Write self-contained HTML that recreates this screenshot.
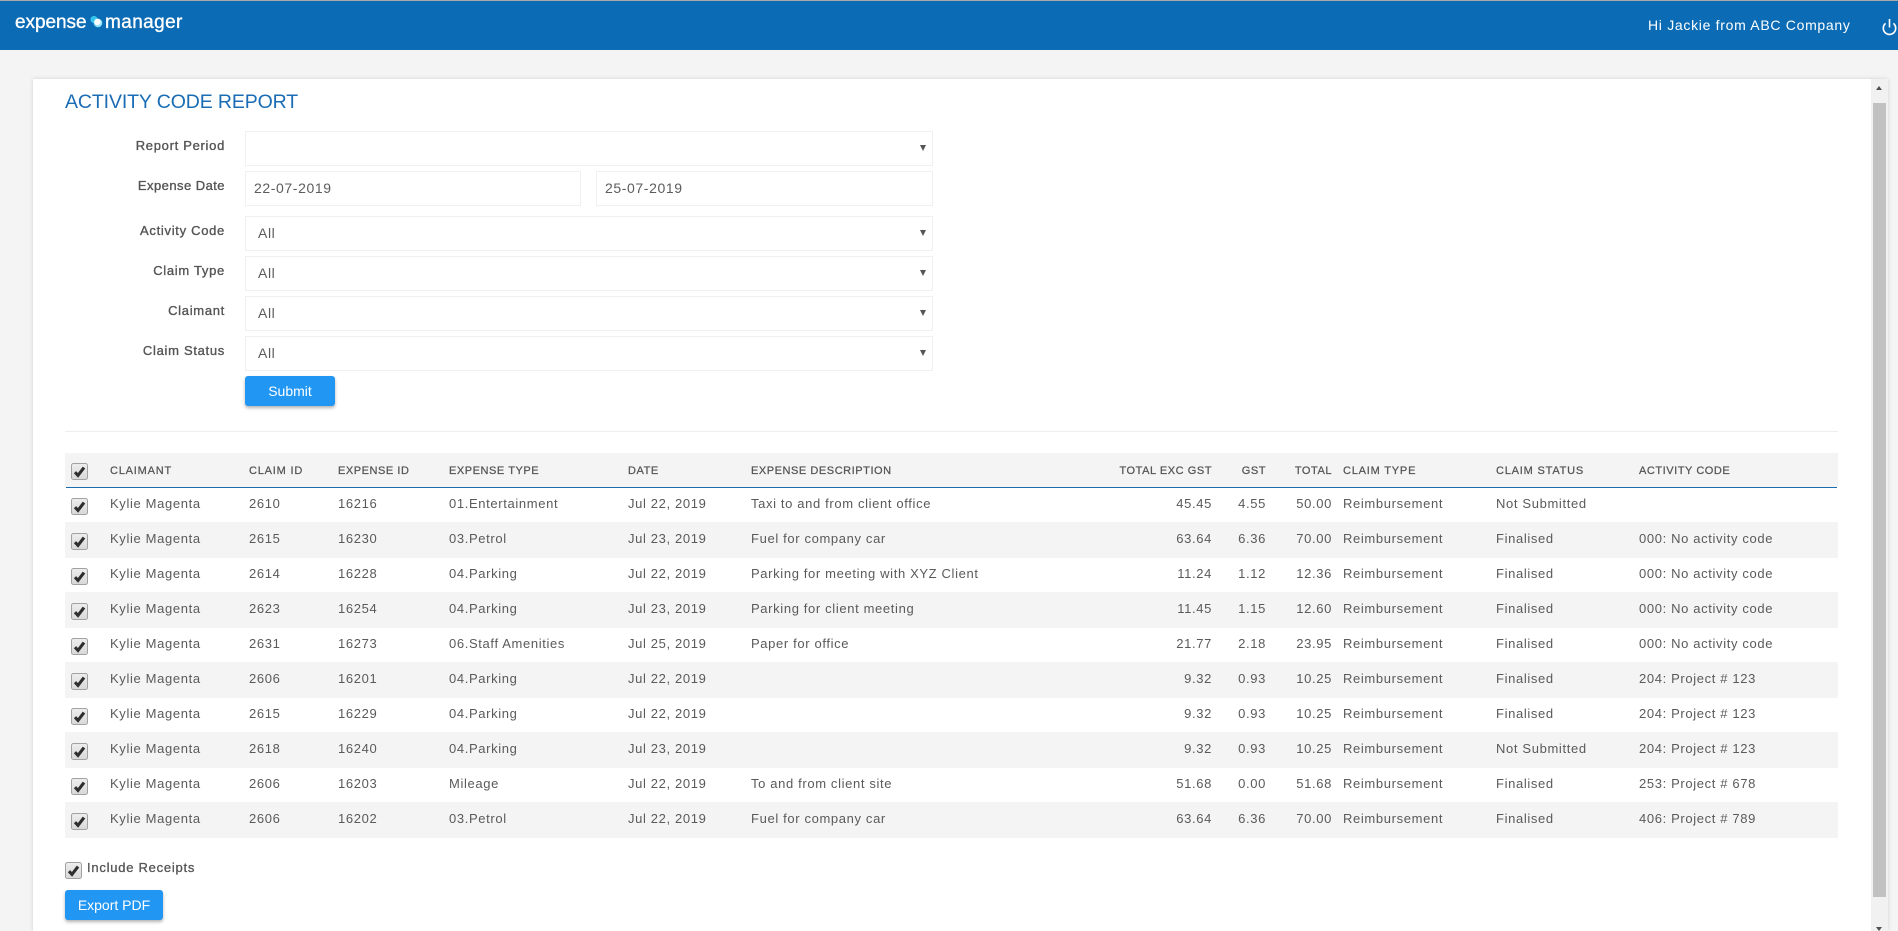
<!DOCTYPE html>
<html lang="en"><head><meta charset="utf-8"><title>Activity Code Report</title>
<style>
html,body{margin:0;padding:0;width:1898px;height:931px;overflow:hidden;background:#f4f4f4}
body{position:relative;font-family:"Liberation Sans",Arial,sans-serif;color:#555;font-size:13px}
div,span{position:absolute;white-space:nowrap}
#top{left:0;top:0;width:1898px;height:50px;background:#0b6cb5;border-top:1px solid #a9a9a9;box-sizing:border-box}
#card{left:33px;top:79px;width:1855px;height:852px;background:#fff;box-shadow:0 0 4px rgba(0,0,0,.15)}
.lab{left:0;width:225px;text-align:right;font-size:13px;letter-spacing:.7px;line-height:18px;height:18px;-webkit-text-stroke:.35px #555}
.box{box-sizing:border-box;border:1px solid #f0f0f0;height:35px;background:#fff;left:245px;width:688px;font-size:14px;letter-spacing:.6px;line-height:33px;padding-left:12px;color:#5c5c5c}
.arr{left:920px;width:0;height:0;border-left:3px solid transparent;border-right:3px solid transparent;border-top:6px solid #555}
.btn{background:#2196f3;color:#fff;font-size:14px;text-align:center;border-radius:3px;box-shadow:0 2px 3px rgba(0,0,0,.3)}
.r{left:0;width:1898px;height:35px;line-height:31px;letter-spacing:.64px;font-size:13px;color:#5a5a5a}
.h{left:0;width:1898px;height:34px;top:453px;line-height:36px;letter-spacing:.55px;font-size:11px;-webkit-text-stroke:.25px #555}
.h .w{letter-spacing:.8px}
.g{left:65px;width:1773px;top:-1px;height:36px;background:#f4f4f4}
.h .g{top:0;height:34px}
.a{left:110px}.b{left:249px}.c{left:338px}.d{left:449px}.e{left:628px}.f{left:751px}
.j{left:1343px}.k{left:1496px}.l{left:1639px}
.m{right:686px}.n{right:632px}.o{right:566px}
svg{position:absolute;display:block}
</style></head><body>
<svg width="0" height="0" style="position:absolute"><defs>
<linearGradient id="cg" x1="0" y1="0" x2="0" y2="1"><stop offset="0" stop-color="#eeeeee"/><stop offset="1" stop-color="#d8d8d8"/></linearGradient>
<symbol id="chk" viewBox="0 0 17 17"><rect x=".5" y=".5" width="16" height="16" rx="2" fill="url(#cg)" stroke="#a2a2a2"/><path d="M4 9.2L7 12.4L13 4.6" fill="none" stroke="#2e2e2e" stroke-width="3.1"/></symbol>
</defs></svg>

<div id="top">
<span style="left:15px;top:7px;font-size:19px;line-height:30px;color:#fff;letter-spacing:-.05px;-webkit-text-stroke:.35px #fff">expense</span>
<svg style="left:90px;top:14px" width="13" height="13" viewBox="0 0 13 13"><circle cx="4" cy="4.5" r="3.6" fill="#35c4ee"/><circle cx="8" cy="8" r="4.3" fill="#8fe4fb"/><circle cx="7.5" cy="6.8" r="3.2" fill="#fff"/></svg>
<span style="left:105px;top:7px;font-size:19px;line-height:30px;color:#fff;letter-spacing:.4px;-webkit-text-stroke:.35px #fff">manager</span>
<span style="left:1648px;top:14px;font-size:14px;line-height:20px;color:#fff;letter-spacing:.7px">Hi Jackie from ABC Company</span>
<svg style="left:1881px;top:17px" width="17" height="18" viewBox="0 0 17 18"><path d="M4.6 5.4A6.2 6.2 0 1 0 12.4 5.4" fill="none" stroke="#fff" stroke-width="1.6"/><path d="M8.5 1V9.5" stroke="#fff" stroke-width="1.6"/></svg>
</div>

<div id="card"></div>

<!-- scrollbar -->
<div style="left:1871px;top:79px;width:17px;height:852px;background:#f1f1f1"></div>
<div style="left:1873px;top:103px;width:13px;height:794px;background:#c1c1c1"></div>
<div style="left:1876px;top:86px;width:0;height:0;border-left:3.5px solid transparent;border-right:3.5px solid transparent;border-bottom:4px solid #505050"></div>
<div style="left:1876px;top:927px;width:0;height:0;border-left:3.5px solid transparent;border-right:3.5px solid transparent;border-top:4px solid #505050"></div>

<div style="left:65px;top:89px;font-size:19.5px;line-height:26px;color:#1a6cb4;letter-spacing:-.12px">ACTIVITY CODE REPORT</div>

<div class="lab" style="top:137px">Report Period</div>
<div class="lab" style="top:177px;letter-spacing:.45px">Expense Date</div>
<div class="lab" style="top:222px">Activity Code</div>
<div class="lab" style="top:262px">Claim Type</div>
<div class="lab" style="top:302px">Claimant</div>
<div class="lab" style="top:342px">Claim Status</div>

<div class="box" style="top:131px"></div><div class="arr" style="top:145px"></div>
<div class="box" style="top:171px;width:336px;padding-left:8px">22-07-2019</div>
<div class="box" style="top:171px;left:596px;width:337px;padding-left:8px">25-07-2019</div>
<div class="box" style="top:216px">All</div><div class="arr" style="top:230px"></div>
<div class="box" style="top:256px">All</div><div class="arr" style="top:270px"></div>
<div class="box" style="top:296px">All</div><div class="arr" style="top:310px"></div>
<div class="box" style="top:336px">All</div><div class="arr" style="top:350px"></div>

<div class="btn" style="left:245px;top:376px;width:90px;height:30px;line-height:30px">Submit</div>
<div style="left:65px;top:431px;width:1773px;height:1px;background:#eee"></div>

<!-- header -->
<div class="h"><div class="g"></div>
<svg style="left:71px;top:10px" width="17" height="17"><use href="#chk"/></svg>
<span class="a w">CLAIMANT</span><span class="b w">CLAIM ID</span><span class="c">EXPENSE ID</span><span class="d">EXPENSE TYPE</span><span class="e">DATE</span><span class="f">EXPENSE DESCRIPTION</span><span class="m">TOTAL EXC GST</span><span class="n">GST</span><span class="o">TOTAL</span><span class="j w">CLAIM TYPE</span><span class="k w">CLAIM STATUS</span><span class="l">ACTIVITY CODE</span></div>
<div style="left:66px;top:487px;width:1771px;height:1px;background:#1a6cac"></div>

<div class="r" style="top:488px"><svg style="left:71px;top:10px" width="17" height="17"><use href="#chk"/></svg>
<span class="a">Kylie Magenta</span><span class="b">2610</span><span class="c">16216</span><span class="d">01.Entertainment</span><span class="e">Jul 22, 2019</span><span class="f">Taxi to and from client office</span><span class="m">45.45</span><span class="n">4.55</span><span class="o">50.00</span><span class="j">Reimbursement</span><span class="k">Not Submitted</span></div>

<div class="r" style="top:523px"><div class="g"></div><svg style="left:71px;top:10px" width="17" height="17"><use href="#chk"/></svg>
<span class="a">Kylie Magenta</span><span class="b">2615</span><span class="c">16230</span><span class="d">03.Petrol</span><span class="e">Jul 23, 2019</span><span class="f">Fuel for company car</span><span class="m">63.64</span><span class="n">6.36</span><span class="o">70.00</span><span class="j">Reimbursement</span><span class="k">Finalised</span><span class="l">000: No activity code</span></div>

<div class="r" style="top:558px"><svg style="left:71px;top:10px" width="17" height="17"><use href="#chk"/></svg>
<span class="a">Kylie Magenta</span><span class="b">2614</span><span class="c">16228</span><span class="d">04.Parking</span><span class="e">Jul 22, 2019</span><span class="f">Parking for meeting with XYZ Client</span><span class="m">11.24</span><span class="n">1.12</span><span class="o">12.36</span><span class="j">Reimbursement</span><span class="k">Finalised</span><span class="l">000: No activity code</span></div>

<div class="r" style="top:593px"><div class="g"></div><svg style="left:71px;top:10px" width="17" height="17"><use href="#chk"/></svg>
<span class="a">Kylie Magenta</span><span class="b">2623</span><span class="c">16254</span><span class="d">04.Parking</span><span class="e">Jul 23, 2019</span><span class="f">Parking for client meeting</span><span class="m">11.45</span><span class="n">1.15</span><span class="o">12.60</span><span class="j">Reimbursement</span><span class="k">Finalised</span><span class="l">000: No activity code</span></div>

<div class="r" style="top:628px"><svg style="left:71px;top:10px" width="17" height="17"><use href="#chk"/></svg>
<span class="a">Kylie Magenta</span><span class="b">2631</span><span class="c">16273</span><span class="d">06.Staff Amenities</span><span class="e">Jul 25, 2019</span><span class="f">Paper for office</span><span class="m">21.77</span><span class="n">2.18</span><span class="o">23.95</span><span class="j">Reimbursement</span><span class="k">Finalised</span><span class="l">000: No activity code</span></div>

<div class="r" style="top:663px"><div class="g"></div><svg style="left:71px;top:10px" width="17" height="17"><use href="#chk"/></svg>
<span class="a">Kylie Magenta</span><span class="b">2606</span><span class="c">16201</span><span class="d">04.Parking</span><span class="e">Jul 22, 2019</span><span class="m">9.32</span><span class="n">0.93</span><span class="o">10.25</span><span class="j">Reimbursement</span><span class="k">Finalised</span><span class="l">204: Project # 123</span></div>

<div class="r" style="top:698px"><svg style="left:71px;top:10px" width="17" height="17"><use href="#chk"/></svg>
<span class="a">Kylie Magenta</span><span class="b">2615</span><span class="c">16229</span><span class="d">04.Parking</span><span class="e">Jul 22, 2019</span><span class="m">9.32</span><span class="n">0.93</span><span class="o">10.25</span><span class="j">Reimbursement</span><span class="k">Finalised</span><span class="l">204: Project # 123</span></div>

<div class="r" style="top:733px"><div class="g"></div><svg style="left:71px;top:10px" width="17" height="17"><use href="#chk"/></svg>
<span class="a">Kylie Magenta</span><span class="b">2618</span><span class="c">16240</span><span class="d">04.Parking</span><span class="e">Jul 23, 2019</span><span class="m">9.32</span><span class="n">0.93</span><span class="o">10.25</span><span class="j">Reimbursement</span><span class="k">Not Submitted</span><span class="l">204: Project # 123</span></div>

<div class="r" style="top:768px"><svg style="left:71px;top:10px" width="17" height="17"><use href="#chk"/></svg>
<span class="a">Kylie Magenta</span><span class="b">2606</span><span class="c">16203</span><span class="d">Mileage</span><span class="e">Jul 22, 2019</span><span class="f">To and from client site</span><span class="m">51.68</span><span class="n">0.00</span><span class="o">51.68</span><span class="j">Reimbursement</span><span class="k">Finalised</span><span class="l">253: Project # 678</span></div>

<div class="r" style="top:803px"><div class="g"></div><svg style="left:71px;top:10px" width="17" height="17"><use href="#chk"/></svg>
<span class="a">Kylie Magenta</span><span class="b">2606</span><span class="c">16202</span><span class="d">03.Petrol</span><span class="e">Jul 22, 2019</span><span class="f">Fuel for company car</span><span class="m">63.64</span><span class="n">6.36</span><span class="o">70.00</span><span class="j">Reimbursement</span><span class="k">Finalised</span><span class="l">406: Project # 789</span></div>

<svg style="left:65px;top:862px" width="17" height="17"><use href="#chk"/></svg>
<div style="left:87px;top:859px;line-height:18px;font-size:13px;letter-spacing:.75px;-webkit-text-stroke:.3px #555">Include Receipts</div>
<div class="btn" style="left:65px;top:890px;width:98px;height:30px;line-height:30px">Export PDF</div>
</body></html>
